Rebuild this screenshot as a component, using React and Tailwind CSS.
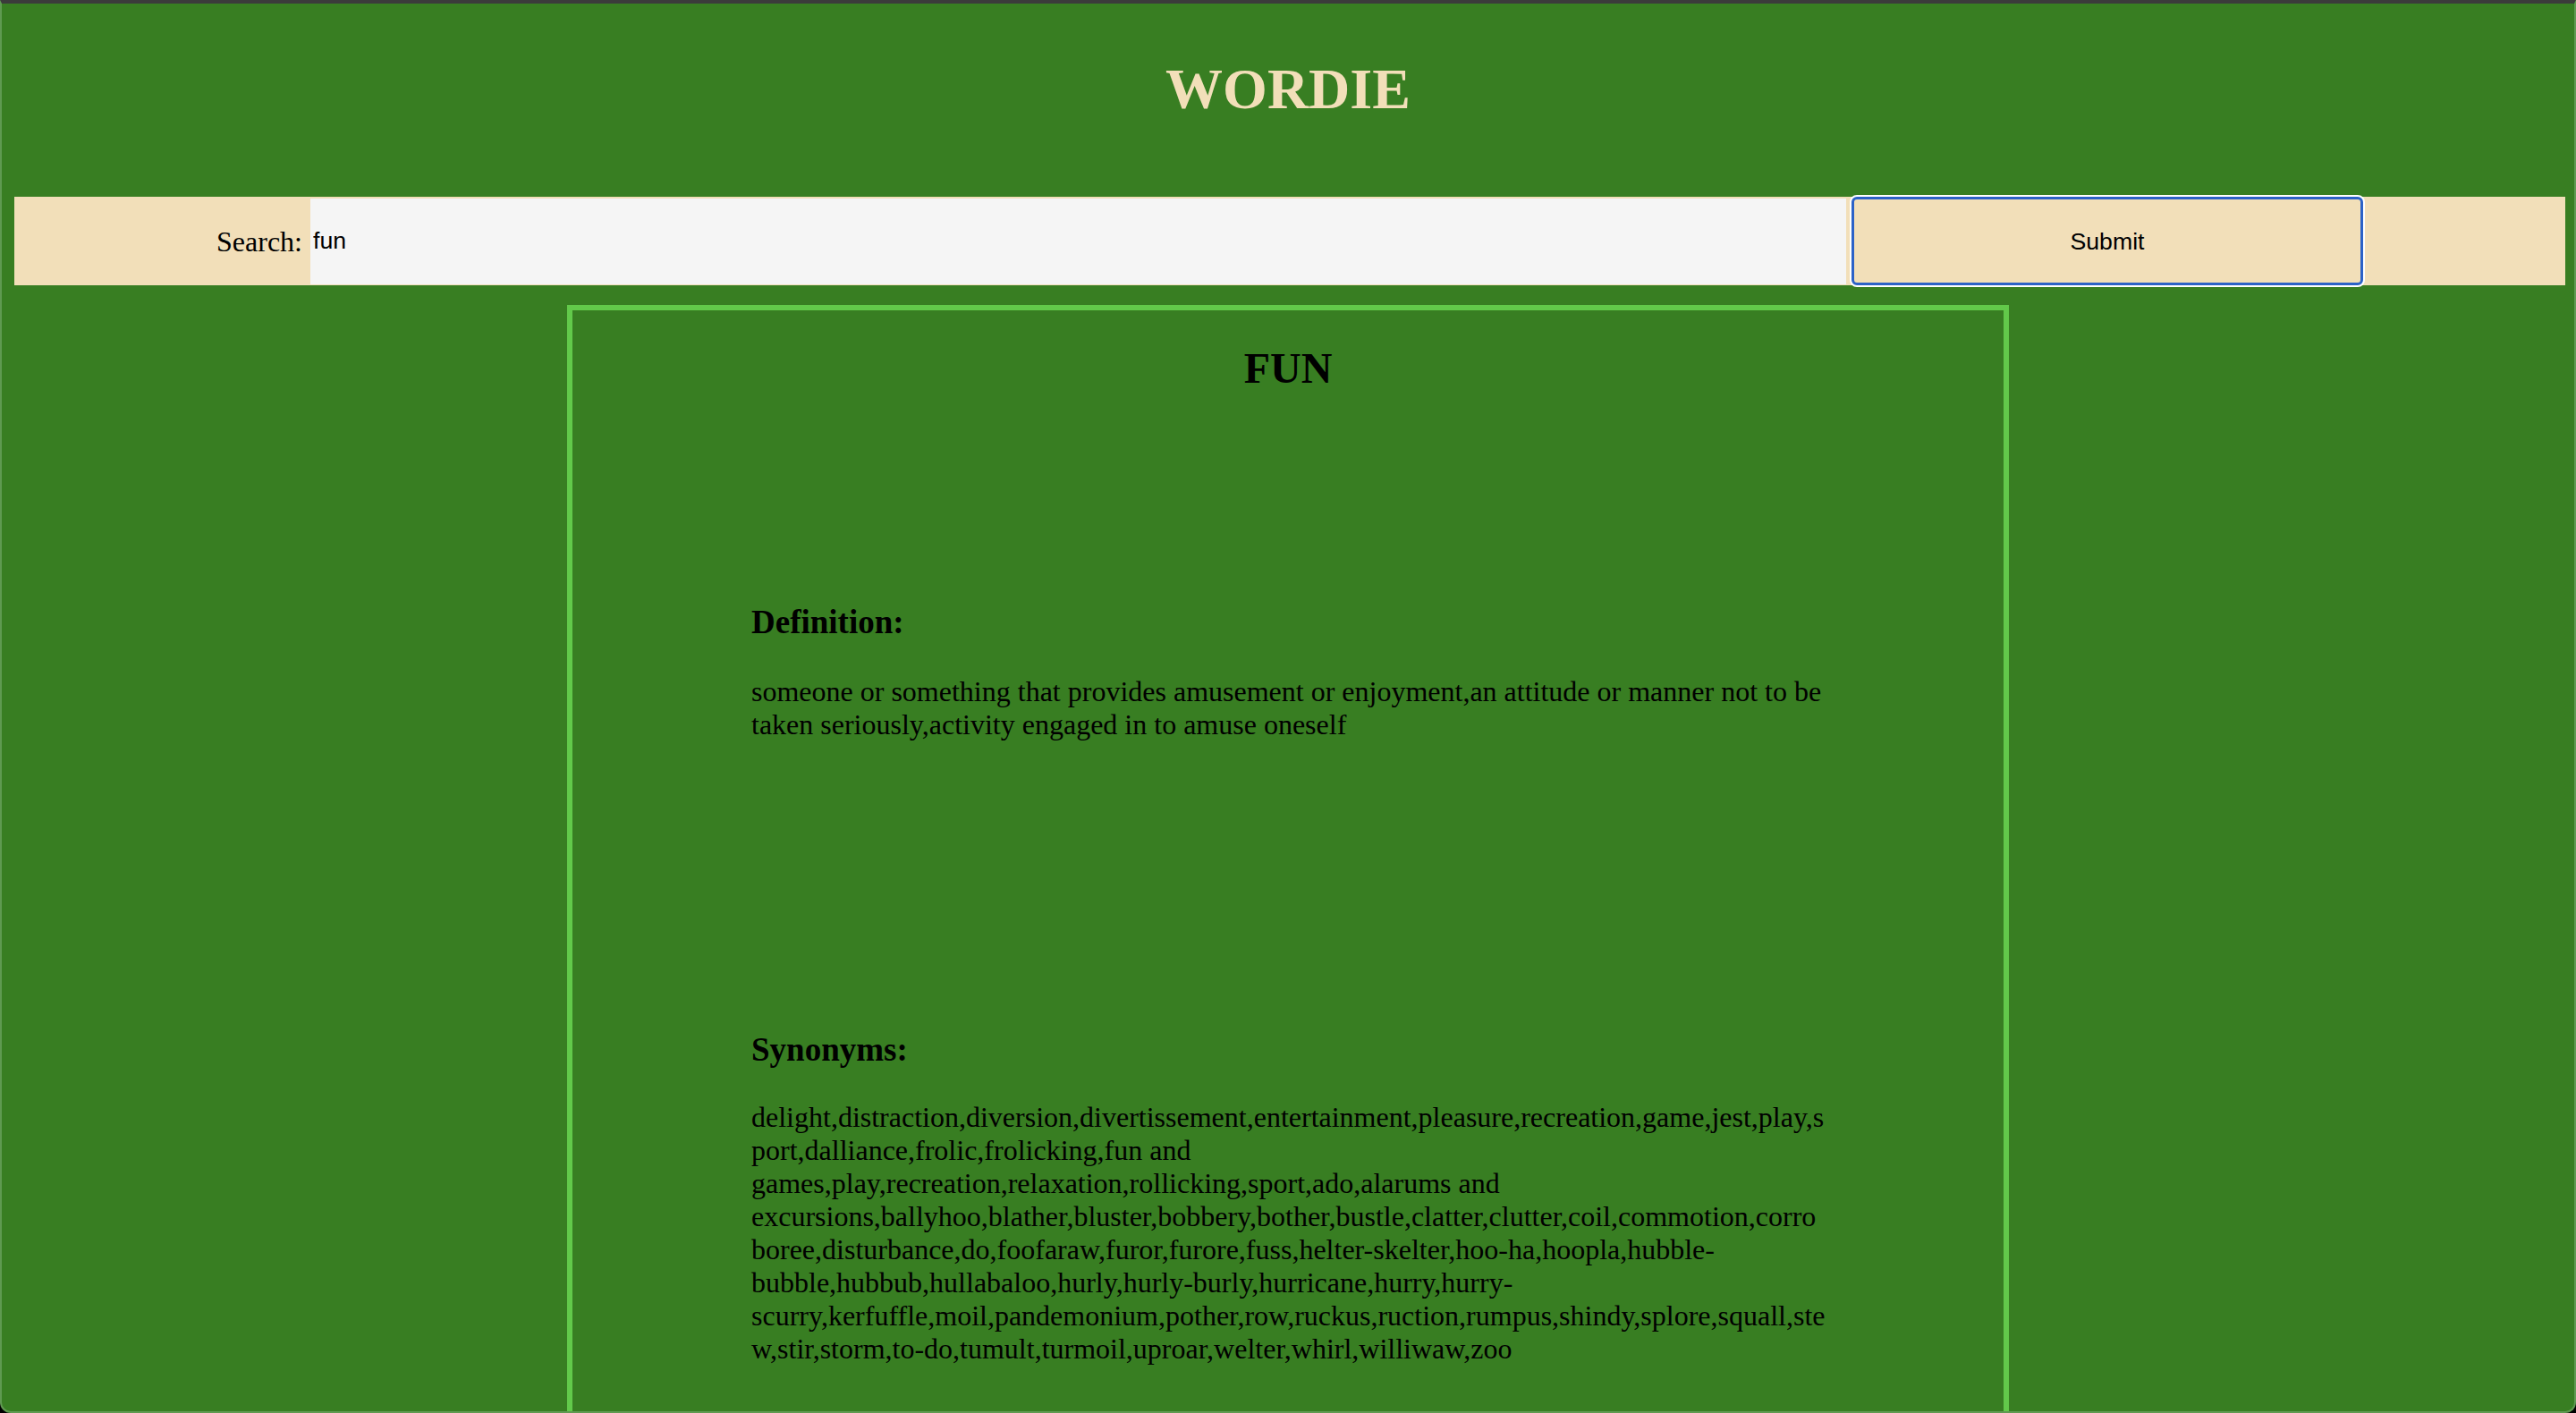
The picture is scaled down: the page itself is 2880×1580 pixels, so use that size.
export default function App() {
  const synLines = [
    "delight,distraction,diversion,divertissement,entertainment,pleasure,recreation,game,jest,play,s",
    "port,dalliance,frolic,frolicking,fun and",
    "games,play,recreation,relaxation,rollicking,sport,ado,alarums and",
    "excursions,ballyhoo,blather,bluster,bobbery,bother,bustle,clatter,clutter,coil,commotion,corro",
    "boree,disturbance,do,foofaraw,furor,furore,fuss,helter-skelter,hoo-ha,hoopla,hubble-",
    "bubble,hubbub,hullabaloo,hurly,hurly-burly,hurricane,hurry,hurry-",
    "scurry,kerfuffle,moil,pandemonium,pother,row,ruckus,ruction,rumpus,shindy,splore,squall,ste",
    "w,stir,storm,to-do,tumult,turmoil,uproar,welter,whirl,williwaw,zoo",
  ];
  const defLines = [
    "someone or something that provides amusement or enjoyment,an attitude or manner not to be",
    "taken seriously,activity engaged in to amuse oneself",
  ];
  return (
    <div className="w-[2880px] h-[1580px] bg-black overflow-hidden font-['Liberation_Serif','Times_New_Roman',serif]">
      <div className="h-full bg-[#387e22] border-x-2 border-b-2 border-t-4 border-[#5f9a51] border-t-[#3b3b3b] rounded-b-[12px] overflow-hidden flex flex-col">
        <h1 className="mt-[59px] text-center text-[64px] leading-[74px] font-bold text-[#f2dfb9]">
          WORDIE
        </h1>

        <form
          className="mt-[83px] ml-[14px] mr-[10px] h-[99px] shrink-0 bg-[#f2dfb9] flex items-stretch"
          onSubmit={(e) => e.preventDefault()}
        >
          <label className="w-[331px] flex items-center justify-end pr-[9px] text-[32px] text-black">
            Search:
          </label>
          <input
            readOnly
            defaultValue="fun"
            className="w-[1717px] h-[96px] self-center bg-[#f5f5f5] pl-[3px] text-[26.67px] text-black outline-none border-0 font-['Liberation_Sans',Arial,sans-serif]"
          />
          <button
            type="submit"
            className="ml-[6px] w-[572px] h-full bg-[#f2dfb9] border-[3px] border-[#2c62c8] rounded-[6px] ring-2 ring-white text-[26.67px] text-black font-['Liberation_Sans',Arial,sans-serif]"
          >
            Submit
          </button>
          <div className="flex-1" />
        </form>

        <div className="mt-[22px] w-[1612px] mx-auto border-[6px] border-[#62c94a] pb-[120px] shrink-0">
          <h2 className="mt-[37px] text-center text-[48px] leading-[55px] font-bold text-black">
            FUN
          </h2>
          <div className="px-[200px]">
            <h3 className="mt-[235px] text-[37px] leading-[43px] font-bold text-black">
              Definition:
            </h3>
            <p className="mt-[38px] text-[32px] leading-[37px] text-black">
              {defLines.map((l, i) => (
                <span key={i} className="block whitespace-nowrap">
                  {l}
                </span>
              ))}
            </p>
            <h3 className="mt-[323px] text-[37px] leading-[43px] font-bold text-black">
              Synonyms:
            </h3>
            <p className="mt-[36px] text-[32px] leading-[37px] text-black">
              {synLines.map((l, i) => (
                <span key={i} className="block whitespace-nowrap">
                  {l}
                </span>
              ))}
            </p>
          </div>
        </div>
      </div>
    </div>
  );
}
